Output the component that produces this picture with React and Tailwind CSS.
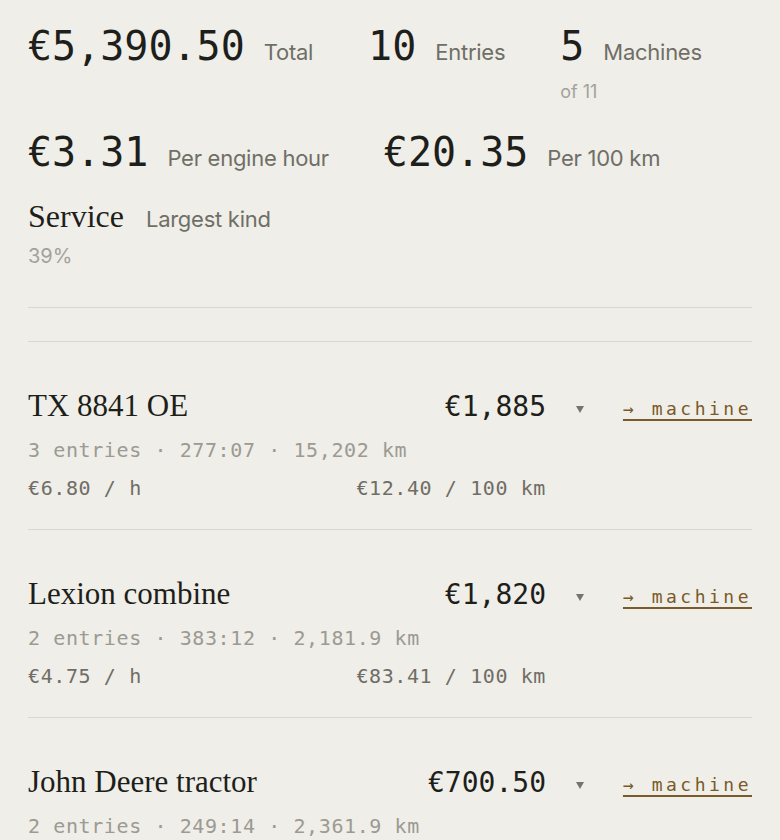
import React from "react";

const mono = { fontFamily: '"DejaVu Sans Mono", "Liberation Mono", monospace' };
const sans = { fontFamily: 'Inter, "Noto Sans", sans-serif' };
const serif = { fontFamily: '"Liberation Serif", "DejaVu Serif", serif' };

const stats = [
  { value: "€5,390.50", label: "Total" },
  { value: "10", label: "Entries" },
  { value: "5", label: "Machines", sub: "of 11" },
  { value: "€3.31", label: "Per engine hour" },
  { value: "€20.35", label: "Per 100 km" },
  { value: "Service", label: "Largest kind", sub: "39%", serif: true },
];

const machines = [
  {
    name: "TX 8841 OE",
    total: "€1,885",
    meta: "3 entries · 277:07 · 15,202 km",
    perHour: "€6.80 / h",
    perKm: "€12.40 / 100 km",
  },
  {
    name: "Lexion combine",
    total: "€1,820",
    meta: "2 entries · 383:12 · 2,181.9 km",
    perHour: "€4.75 / h",
    perKm: "€83.41 / 100 km",
  },
  {
    name: "John Deere tractor",
    total: "€700.50",
    meta: "2 entries · 249:14 · 2,361.9 km",
    perHour: "€2.81 / h",
    perKm: "€29.66 / 100 km",
  },
];

function Stat({ value, label, sub, serif: isSerif }) {
  return (
    <div className={isSerif ? "-mt-[4px] flex flex-col" : "flex flex-col"}>
      <div
        className={
          isSerif
            ? "flex items-baseline gap-[22px] leading-[40px]"
            : "flex items-baseline gap-[19px] leading-[40px]"
        }
      >
        {isSerif ? (
          <span className="text-[32px] text-[#1e1e1b]" style={serif}>
            {value}
          </span>
        ) : (
          <span className="text-[40px] leading-none text-[#1e1e1b]" style={mono}>
            {value}
          </span>
        )}
        <span
          className="text-[22px] leading-none tracking-[-0.012em] text-[#6f6e67]"
          style={sans}
        >
          {label}
        </span>
      </div>
      {sub && (
        <div
          className={
            isSerif
              ? "mt-[8px] text-[20px] leading-[24px] text-[#a3a29a]"
              : "mt-[14px] text-[18px] leading-[24px] text-[#a3a29a]"
          }
          style={sans}
        >
          {sub}
        </div>
      )}
    </div>
  );
}

function Caret() {
  return (
    <svg width="8" height="7" viewBox="0 0 8 7" className="self-center">
      <polygon points="0,0 8,0 4,7" fill="#75746d" />
    </svg>
  );
}

function MachineRow({ m }) {
  return (
    <div className="flex border-b border-[#d9d7cf] pt-[44px] pb-[23px]">
      <div className="flex-1">
        <div className="flex items-baseline justify-between">
          <span className="text-[31px] leading-[40px] text-[#1e1e1b]" style={serif}>
            {m.name}
          </span>
          <span className="text-[28px] leading-[40px] text-[#1e1e1b]" style={mono}>
            {m.total}
          </span>
        </div>
        <div
          className="mt-[5px] text-[20px] leading-[36px] tracking-[0.03em] text-[#9c9a92]"
          style={mono}
        >
          {m.meta}
        </div>
        <div
          className="mt-[2px] flex justify-between text-[20px] leading-[36px] tracking-[0.03em] text-[#6f6d66]"
          style={mono}
        >
          <span>{m.perHour}</span>
          <span>{m.perKm}</span>
        </div>
      </div>
      <div className="mt-[2px] flex h-[40px] w-[206px] items-center">
        <span className="ml-[30px] mt-[2px]">
          <Caret />
        </span>
        <a
          href="#"
          className="ml-auto text-[18px] tracking-[3.5px] text-[#7a5a28] underline decoration-2 underline-offset-[4px]"
          style={mono}
        >
          → machine
        </a>
      </div>
    </div>
  );
}

export default function App() {
  return (
    <div className="min-h-[840px] bg-[#efeee8] px-[28px] pt-[26px]">
      <div className="flex flex-wrap gap-x-[55px] gap-y-[28px]">
        {stats.map((s) => (
          <Stat key={s.label} {...s} />
        ))}
      </div>
      <div className="mt-[39px] h-[35px] border-y border-[#d9d7cf]" />
      {machines.map((m) => (
        <MachineRow key={m.name} m={m} />
      ))}
    </div>
  );
}
